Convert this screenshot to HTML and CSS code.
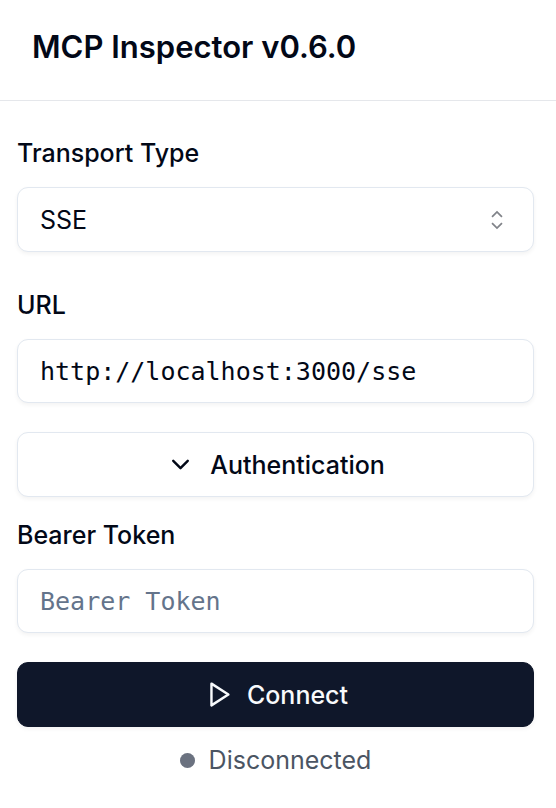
FILE: index.html
```html
<!DOCTYPE html>
<html lang="en">
<head>
<meta charset="utf-8">
<meta name="viewport" content="width=device-width, initial-scale=1">
<title>MCP Inspector</title>
<link rel="stylesheet" href="styles.css">
</head>
<body>
<header class="header">
  <h1 class="title">MCP Inspector v0.6.0</h1>
</header>
<main class="panel">
  <div class="server">
    <div class="field">
      <label class="label" for="transport">Transport Type</label>
      <div class="select-wrap">
        <select class="control" id="transport">
          <option>SSE</option>
          <option>STDIO</option>
        </select>
        <svg class="select-icon" viewBox="0 0 15 15" fill="none" stroke="currentColor" stroke-width="1.1" aria-hidden="true"><path d="M4.4 5.6l3.1-3.1 3.1 3.1M4.4 9.4l3.1 3.1 3.1-3.1"/></svg>
      </div>
    </div>
    <div class="field">
      <label class="label" for="url">URL</label>
      <input class="control mono" id="url" type="text" value="http://localhost:3000/sse">
    </div>
  </div>
  <div class="auth">
    <button class="control button" type="button" aria-expanded="true">
      <svg class="icon" viewBox="0 0 24 24" fill="none" stroke="currentColor" stroke-width="2" stroke-linecap="round" stroke-linejoin="round" aria-hidden="true"><path d="m6 9 6 6 6-6"/></svg>
      <span>Authentication</span>
    </button>
    <div class="field">
      <label class="label" for="token">Bearer Token</label>
      <input class="control mono" id="token" type="text" placeholder="Bearer Token">
    </div>
  </div>
  <div class="connection">
    <button class="control button primary" type="button">
      <svg class="icon" viewBox="0 0 24 24" fill="none" stroke="currentColor" stroke-width="2" stroke-linejoin="round" aria-hidden="true"><path d="M7 3l14 9-14 9z"/></svg>
      <span>Connect</span>
    </button>
    <p class="status"><span class="dot"></span>Disconnected</p>
  </div>
</main>
</body>
</html>
```
FILE: styles.css
```css
* { box-sizing: border-box; }

body {
  margin: 0;
  background: #fff;
  color: #020817;
  font-family: Inter, "Liberation Sans", sans-serif;
  font-size: 25px;
  line-height: 36px;
}

.header {
  padding: 27px 32px 33px;
  border-bottom: 1px solid #e5e7eb;
}

.title {
  margin: 0;
  font-size: 31px;
  line-height: 40px;
  font-weight: 600;
}

.panel {
  display: flex;
  flex-direction: column;
  gap: 29px;
  padding: 34px 22px 24px 17px;
}

.server,
.auth,
.field,
.connection {
  display: flex;
  flex-direction: column;
}

.server { gap: 35px; }
.auth { gap: 20px; }
.field { gap: 16px; }
.connection { gap: 15px; }

.label {
  font-weight: 500;
}

.control {
  display: block;
  width: 100%;
  height: 65px;
  margin: 0;
  padding: 0 22px;
  border: 1px solid #e2e8f0;
  border-radius: 11px;
  background: #fff;
  box-shadow: 0 2px 4px rgb(0 0 0 / 5%);
  color: inherit;
  font: inherit;
  appearance: none;
}

.select-wrap {
  display: grid;
  align-items: center;
}

.select-wrap > * {
  grid-area: 1 / 1;
}

.select-icon {
  justify-self: end;
  width: 24px;
  height: 24px;
  margin-right: 25px;
  color: #808389;
  pointer-events: none;
}

.mono {
  height: 64px;
  font-family: "DejaVu Sans Mono", "Liberation Mono", monospace;
}

.mono::placeholder {
  color: #64748b;
  opacity: 1;
}

.button {
  display: flex;
  align-items: center;
  justify-content: center;
  gap: 15px;
  font-weight: 500;
}

.icon {
  width: 29px;
  height: 29px;
}

.primary {
  border-color: #0f172a;
  background: #0f172a;
  color: #f8fafc;
}

.status {
  display: flex;
  align-items: center;
  justify-content: center;
  gap: 14px;
  margin: 0;
  color: #4b5563;
}

.dot {
  width: 15px;
  height: 15px;
  border-radius: 50%;
  background: #6b7280;
}
```
